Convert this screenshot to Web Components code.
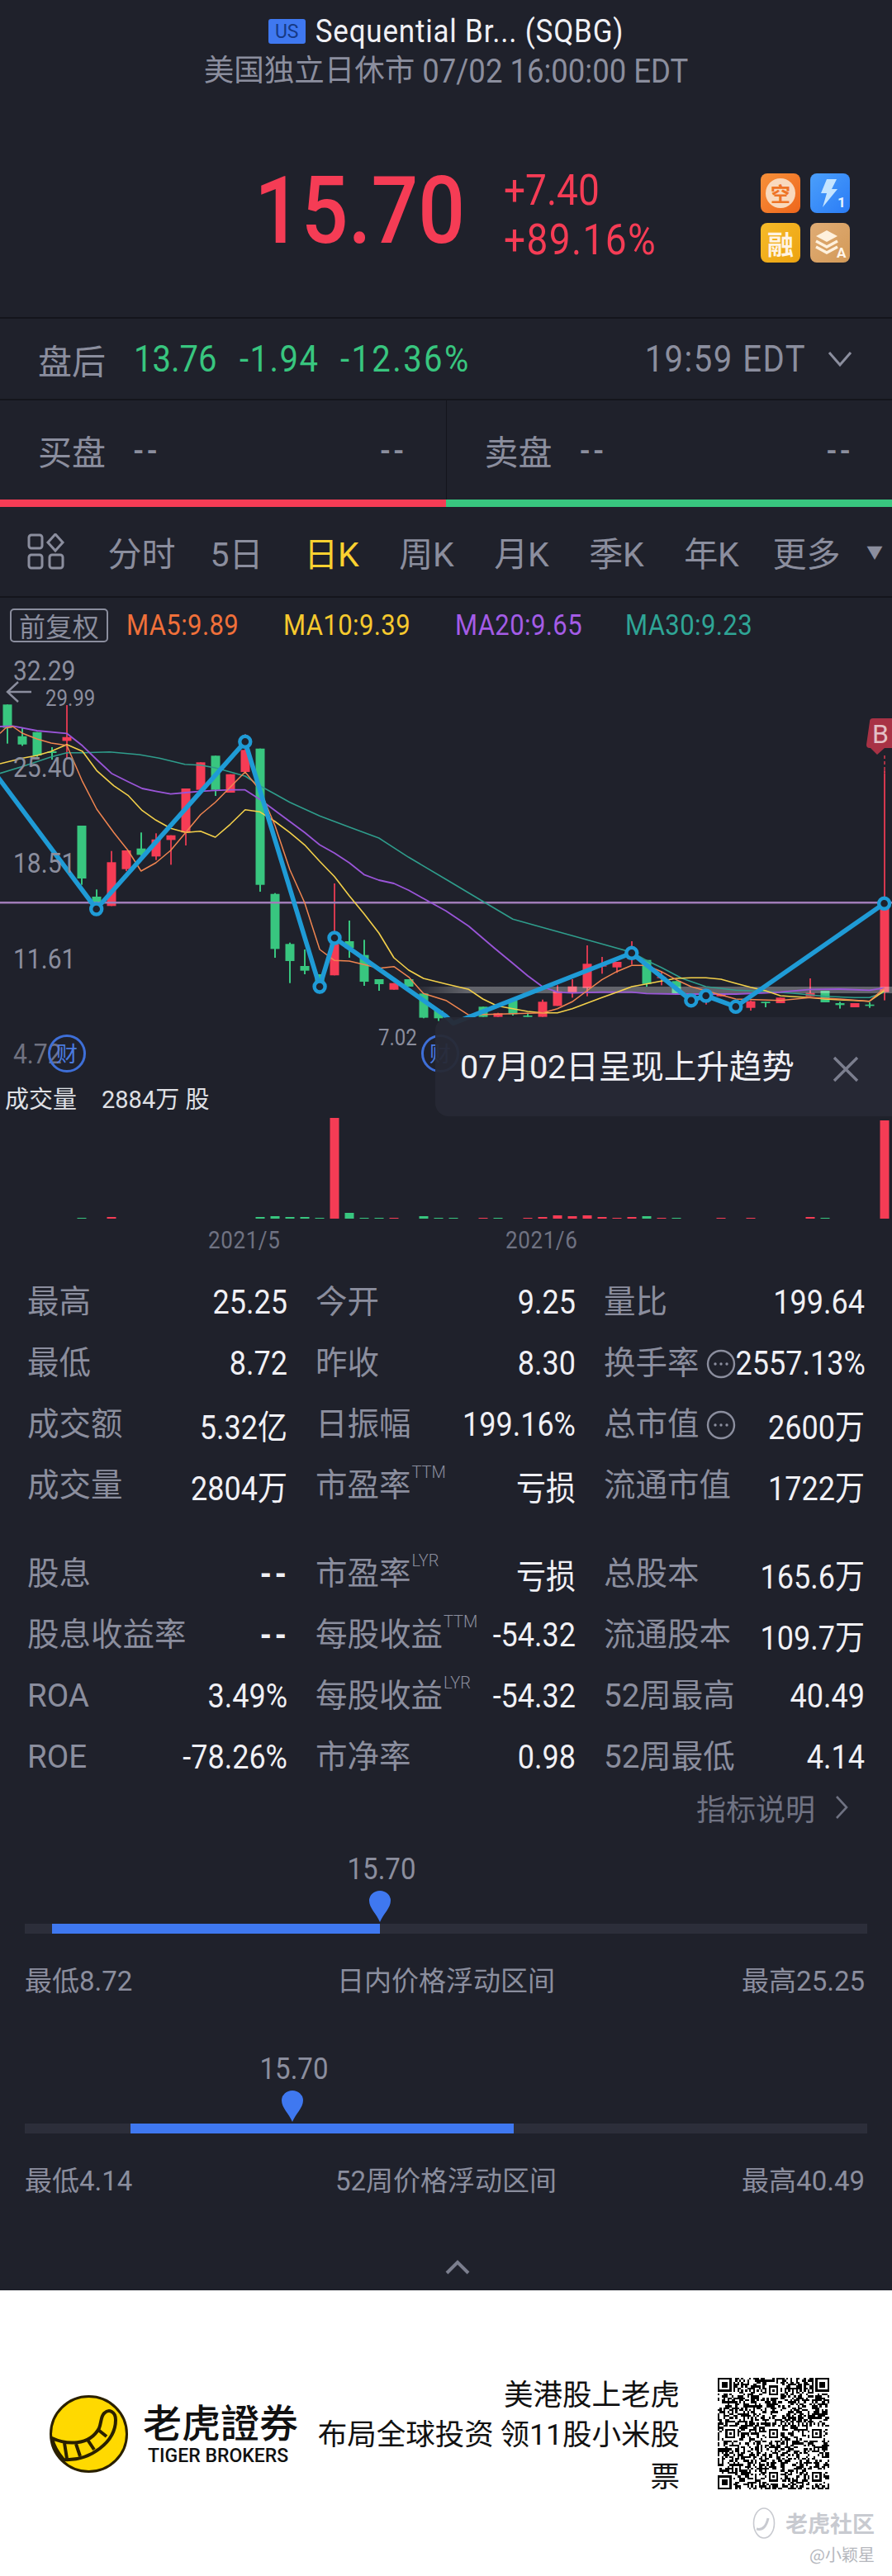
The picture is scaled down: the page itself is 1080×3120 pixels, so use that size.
<!DOCTYPE html>
<html lang="zh">
<head>
<meta charset="utf-8">
<title>SQBG</title>
<style>
  html, body { margin: 0; padding: 0; background: #1f212b; }
  body { width: 1080px; height: 3120px; overflow: hidden; color: #8b8e9e; font-family: Roboto, "Noto Sans CJK SC", sans-serif; }
</style>
</head>
<body>
<stock-header></stock-header>
<price-block></price-block>
<after-hours></after-hours>
<bid-ask></bid-ask>
<period-tabs></period-tabs>
<kline-chart></kline-chart>
<stat-table></stat-table>
<price-range value="15.70" pos="430" from="33" to="430" low="最低8.72" high="最高25.25" title="日内价格浮动区间"></price-range>
<price-range value="15.70" pos="324" from="128" to="592" low="最低4.14" high="最高40.49" title="52周价格浮动区间"></price-range>
<collapse-row></collapse-row>
<promo-footer></promo-footer>

<script>
const FONT = 'Roboto, "Noto Sans CJK SC", sans-serif';
const RED = "#f53c55";
const GREEN = "#38c67f";

class DinNum extends HTMLElement {
  constructor() {
    super();
    this.attachShadow({ mode: "open" }).innerHTML = `
      <style>
        :host { display: inline-block; transform: scaleY(1.13); font-family: ${FONT}; }
      </style>
      <slot></slot>`;
  }
}
customElements.define("din-num", DinNum);

class StockHeader extends HTMLElement {
  constructor() {
    super();
    this.attachShadow({ mode: "open" }).innerHTML = `
      <style>
        :host { display: block; height: 120px; padding-top: 14px; box-sizing: border-box; font-family: ${FONT}; }
        .title { display: flex; justify-content: center; align-items: center; gap: 12px; height: 48px; color: #f0f0f5; font-size: 35px; letter-spacing: .8px; }
        .us { width: 45px; height: 30px; border-radius: 3px; background: #3f78f0; color: #163a86; font-size: 23px; letter-spacing: 0; display: flex; align-items: center; justify-content: center; }
        .sub { display: flex; justify-content: center; height: 48px; line-height: 48px; color: #8b8e9e; font-size: 36.5px; }
      </style>
      <div class="title"><span class="us">US</span><din-num>Sequential Br... (SQBG)</din-num></div>
      <div class="sub">美国独立日休市&nbsp;<din-num>07/02 16:00:00 EDT</din-num></div>`;
  }
}
customElements.define("stock-header", StockHeader);

class PriceBlock extends HTMLElement {
  constructor() {
    super();
    this.attachShadow({ mode: "open" }).innerHTML = `
      <style>
        :host { display: flex; align-items: center; height: 266px; box-sizing: border-box; padding: 8px 51px 0 308px; border-bottom: 2px solid #14151c; color: ${RED}; font-family: ${FONT}; }
        .price { font-size: 100px; font-weight: 500; width: 302px; flex: none; line-height: 1; }
        .chg { display: flex; flex-direction: column; gap: 22px; font-size: 46px; margin-top: 8px; line-height: 38px; }
        .wide { letter-spacing: 1.4px; }
        .badges { margin-left: auto; margin-top: 16px; display: grid; grid-template-columns: 48px 48px; gap: 12px; }
        .b { width: 48px; height: 48px; border-radius: 8px; display: flex; align-items: center; justify-content: center; color: #fff3e2; font-family: "Noto Sans CJK SC", sans-serif; font-weight: 700; }
        .kong { background: linear-gradient(135deg, #f7913a, #ee661c); font-size: 24px; }
        .kong span { width: 36px; height: 36px; border-radius: 50%; background: #f9d9bd; color: #ee7426; display: flex; align-items: center; justify-content: center; line-height: 1; }
        .flash { background: linear-gradient(135deg, #4b9ffb, #2a7cf6); }
        .rong { background: linear-gradient(135deg, #f7bb2a, #eca310); font-size: 32px; }
        .stack { background: linear-gradient(135deg, #e0ac75, #d39a58); }
      </style>
      <din-num class="price">15.70</din-num>
      <div class="chg"><din-num>+7.40</din-num><din-num class="wide">+89.16%</din-num></div>
      <div class="badges">
        <div class="b kong"><span>空</span></div>
        <div class="b flash">
          <svg width="48" height="48" viewBox="0 0 48 48">
            <path d="M20 7h12l-6 12h7L15 41l5-17h-7z" fill="#c4e4ff"/>
            <text x="33" y="41" font-size="17" font-weight="700" font-family="Roboto" fill="#e8f4ff">1</text>
          </svg>
        </div>
        <div class="b rong">融</div>
        <div class="b stack">
          <svg width="48" height="48" viewBox="0 0 48 48">
            <path d="M20 9l13 7-13 7-13-7z" fill="#fff1dd"/>
            <path d="M7 22l13 7 13-7M7 29l13 7 13-7" fill="none" stroke="#fff1dd" stroke-width="3.4"/>
            <text x="32" y="42" font-size="17" font-weight="700" font-family="Roboto" fill="#fff6ea">A</text>
          </svg>
        </div>
      </div>`;
  }
}
customElements.define("price-block", PriceBlock);

class AfterHours extends HTMLElement {
  constructor() {
    super();
    this.attachShadow({ mode: "open" }).innerHTML = `
      <style>
        :host { display: flex; align-items: center; height: 99px; box-sizing: border-box; padding: 0 48px 0 46px; border-bottom: 2px solid #14151c; font-family: ${FONT}; }
        .lbl { font-size: 41px; font-family: "Noto Sans CJK SC", sans-serif; margin-right: 34px; color: #8b8e9e; }
        .g { color: ${GREEN}; font-size: 40px; flex: none; }
        .t { margin-left: auto; font-size: 40px; color: #8b8e9e; letter-spacing: 1.5px; }
        svg { margin-left: 26px; }
      </style>
      <span class="lbl">盘后</span>
      <din-num class="g" style="width:128px">13.76</din-num><din-num class="g" style="width:122px;letter-spacing:1.5px">-1.94</din-num><din-num class="g" style="letter-spacing:2.4px">-12.36%</din-num>
      <din-num class="t">19:59 EDT</din-num>
      <svg width="30" height="20" viewBox="0 0 30 20"><path d="M2 2l13 15L28 2" fill="none" stroke="#8b8e9e" stroke-width="3"/></svg>`;
  }
}
customElements.define("after-hours", AfterHours);

class BidAsk extends HTMLElement {
  constructor() {
    super();
    this.attachShadow({ mode: "open" }).innerHTML = `
      <style>
        :host { display: block; font-family: "Noto Sans CJK SC", sans-serif; }
        .row { display: flex; height: 120px; }
        .side { flex: 1; display: flex; align-items: center; box-sizing: border-box; padding: 0 47px 0 46px; font-size: 41px; }
        .side + .side { border-left: 1px solid #14151c; }
        .d { font-family: ${FONT}; font-weight: 700; font-size: 34px; color: #8b8e9e; margin-left: 33px; letter-spacing: 3px; }
        .d:last-child { margin-left: auto; }
        .bar { display: flex; height: 9px; }
        .bar i { flex: 1; }
      </style>
      <div class="row">
        <div class="side">买盘<span class="d">--</span><span class="d">--</span></div>
        <div class="side">卖盘<span class="d">--</span><span class="d">--</span></div>
      </div>
      <div class="bar"><i style="background:${RED}"></i><i style="background:${GREEN}"></i></div>`;
  }
}
customElements.define("bid-ask", BidAsk);

class PeriodTabs extends HTMLElement {
  constructor() {
    super();
    const tabs = ["分时", "5日", "日K", "周K", "月K", "季K", "年K", "更多"];
    this.attachShadow({ mode: "open" }).innerHTML = `
      <style>
        :host { display: flex; align-items: center; height: 110px; box-sizing: border-box; padding-left: 33px; border-bottom: 2px solid #14151c; color: #8b8e9e; font-size: 41px; font-family: ${FONT}; }
        svg { flex: none; margin-right: 35px; }
        .tab { flex: none; width: 115px; text-align: center; }
        .on { color: #fbd130; }
        .more { color: #8b8e9e; font-size: 20px; margin-left: 15px; }
      </style>
      <svg width="46" height="44" viewBox="0 0 46 44" fill="none" stroke="#8b8e9e" stroke-width="3">
        <rect x="2" y="2" width="16" height="16" rx="3"/>
        <path d="M34 1l9 10-9 10-9-10z"/>
        <rect x="2" y="26" width="16" height="16" rx="3"/>
        <rect x="27" y="26" width="16" height="16" rx="3"/>
      </svg>
      ${tabs.map((t) => `<span class="tab${t === "日K" ? " on" : ""}">${t}</span>`).join("")}
      <span class="more">▼</span>`;
  }
}
customElements.define("period-tabs", PeriodTabs);

// chart points were read off the reference, x in 0..3136, y in 0..1560 from y=760
const zx = (x) => (x / 2.904).toFixed(1);
const zy = (y) => (y / 3 + 36).toFixed(1);

// [index, colour, wickTop, bodyTop, bodyBottom, wickBottom]
const CANDLES = [
  [0,"g",280,280,365,422],[1,"g",365,395,425,430],[2,"g",380,380,465,470],[3,"g",435,450,456,480],
  [4,"r",282,398,412,475],[5,"g",720,720,912,935],[6,"g",952,978,1005,1010],[7,"r",812,853,1012,1012],
  [8,"r",810,810,878,885],[9,"g",745,803,826,830],[10,"r",748,770,832,845],[11,"r",755,755,772,862],
  [12,"r",585,585,745,792],[13,"r",490,490,590,590],[14,"g",466,466,590,612],[15,"r",533,533,600,600],
  [16,"r",388,445,525,525],[17,"g",440,440,935,960],[18,"g",965,968,1168,1200],[19,"g",1145,1150,1212,1292],
  [20,"g",1170,1230,1247,1260],[21,"g",1260,1260,1300,1330],[22,"r",930,1150,1264,1264],[23,"g",1065,1140,1165,1200],
  [24,"g",1135,1190,1287,1302],[25,"g",1278,1278,1296,1320],[26,"r",1292,1292,1316,1316],[27,"g",1278,1278,1305,1305],
  [28,"g",1330,1330,1418,1420],[29,"g",1392,1392,1420,1430],
  [32,"g",1378,1378,1415,1415],[33,"r",1400,1402,1415,1415],[34,"g",1355,1355,1405,1410],[35,"g",1400,1410,1415,1415],
  [36,"r",1352,1360,1415,1415],[37,"r",1300,1322,1375,1375],[38,"r",1278,1304,1328,1345],[39,"r",1155,1222,1310,1340],
  [40,"r",1197,1228,1232,1258],[41,"r",1215,1215,1235,1255],[42,"r",1140,1175,1205,1225],[43,"g",1208,1208,1295,1305],
  [44,"r",1250,1270,1274,1300],[45,"g",1285,1285,1330,1330],[47,"r",1320,1325,1350,1370],[48,"r",1330,1330,1340,1340],
  [50,"r",1355,1358,1382,1392],[51,"g",1360,1360,1365,1380],[52,"r",1345,1345,1365,1365],
  [54,"r",1275,1328,1340,1340],[55,"g",1320,1320,1362,1362],[56,"g",1360,1365,1372,1385],[57,"r",1365,1365,1380,1380],
  [58,"g",1362,1370,1375,1382],[59,"r",520,1020,1325,1355],
];

const MA5 = [[0,385],[20,365],[45,360],[80,385],[130,405],[180,420],[235,428],[290,560],[340,660],[400,745],[450,810],[496,885],[548,855],[600,810],[653,745],[705,680],[757,635],[810,580],[862,525],[914,590],[967,720],[1019,880],[1071,1000],[1124,1170],[1176,1210],[1228,1212],[1280,1225],[1332,1238],[1385,1232],[1437,1270],[1489,1330],[1568,1355],[1648,1408],[1908,1400],[1960,1385],[2012,1360],[2064,1320],[2116,1280],[2169,1250],[2221,1228],[2273,1228],[2325,1250],[2378,1280],[2430,1305],[2482,1320],[2535,1335],[2587,1350],[2744,1355],[2848,1345],[2953,1350],[3057,1358],[3109,1310]];
const MA10 = [[0,495],[80,475],[130,465],[180,450],[235,425],[290,450],[340,520],[400,575],[450,610],[500,665],[548,700],[600,730],[653,745],[705,740],[757,762],[810,715],[862,662],[914,670],[967,705],[1019,745],[1071,790],[1124,850],[1176,905],[1228,975],[1280,1040],[1332,1110],[1385,1200],[1437,1245],[1489,1275],[1568,1295],[1648,1315],[1698,1350],[1748,1375],[1803,1385],[1855,1395],[1907,1400],[1960,1400],[2012,1385],[2064,1365],[2116,1345],[2169,1325],[2221,1305],[2273,1295],[2325,1285],[2378,1275],[2430,1273],[2482,1273],[2535,1278],[2587,1293],[2639,1307],[2692,1320],[2744,1338],[2796,1342],[2848,1345],[2900,1350],[2953,1353],[3005,1355],[3057,1358],[3109,1320]];
const MA20 = [[0,360],[45,358],[130,375],[235,385],[290,430],[340,480],[392,530],[450,560],[500,585],[548,595],[600,605],[653,600],[705,595],[757,592],[810,590],[862,590],[914,625],[967,665],[1019,705],[1071,745],[1124,790],[1176,820],[1228,855],[1280,898],[1332,918],[1385,930],[1437,955],[1489,985],[1568,1030],[1648,1085],[1738,1165],[1803,1220],[1855,1265],[1907,1305],[1960,1325],[2012,1328],[2116,1325],[2221,1325],[2273,1330],[2378,1332],[2482,1332],[2587,1332],[2692,1328],[2744,1325],[2848,1315],[2953,1314],[3057,1318],[3109,1310]];
const MA30 = [[0,530],[80,505],[180,470],[235,455],[290,455],[385,452],[490,462],[560,475],[650,497],[705,500],[757,510],[810,525],[862,540],[914,575],[967,605],[1019,635],[1124,685],[1228,725],[1332,765],[1437,835],[1568,915],[1698,995],[1803,1060],[1907,1090],[2012,1120],[2116,1150],[2221,1180],[2273,1210],[2325,1235],[2398,1275],[2482,1305],[2587,1318],[2692,1322],[2796,1330],[2900,1340],[3005,1345],[3057,1345],[3109,1325]];
const ZIG = [[-10,540],[339,1023],[862,415],[1124,1305],[1176,1128],[1568,1412],[1593,1438],[2221,1183],[2430,1355],[2482,1338],[2587,1378],[3109,1003]];
const NODES = [[339,1023],[862,415],[1124,1305],[1176,1128],[2221,1183],[2430,1355],[2482,1338],[2587,1378],[3109,1003]];

const line = (pts, color, w) =>
  `<polyline fill="none" stroke="${color}" stroke-width="${w}" stroke-linejoin="round" points="${pts.map((p) => zx(p[0]) + "," + zy(p[1])).join(" ")}"/>`;

function candleSvg() {
  return CANDLES.map(([i, c, wt, bt, bb, wb]) => {
    const x = 9 + 18 * i;
    const col = c === "r" ? RED : GREEN;
    return `<rect x="${x - 1}" y="${zy(wt)}" width="2" height="${(wb - wt) / 3}" fill="${col}" opacity="${c === "r" ? 0.85 : 1}"/>` +
      `<rect x="${x - 5.5}" y="${zy(bt)}" width="11" height="${(bb - bt) / 3}" fill="${col}"/>`;
  }).join("");
}

// volume bars: [index, colour, height]
const VOLS = [[5,"g",1],[7,"r",2],[17,"g",2],[18,"g",3],[19,"g",2],[20,"g",2],[21,"g",1],[22,"r",122],[23,"g",7],[24,"g",1],[25,"g",1],[26,"r",1],[28,"g",3],[29,"g",1],[30,"g",1],[32,"r",1],[33,"g",1],[35,"r",1],[36,"r",2],[37,"r",4],[38,"r",3],[39,"r",4],[40,"r",2],[41,"r",1],[42,"r",2],[43,"g",3],[44,"r",1],[45,"g",1],[48,"r",1],[50,"r",1],[54,"r",2],[55,"g",1],[59,"r",119]];

function volSvg() {
  return VOLS.map(([i, c, h]) =>
    `<rect x="${9 + 18 * i - 5.5}" y="${752 - h}" width="11" height="${h}" fill="${c === "r" ? RED : GREEN}"/>`).join("");
}

class KlineChart extends HTMLElement {
  constructor() {
    super();
    this.attachShadow({ mode: "open" }).innerHTML = `
      <style>
        :host { display: block; position: relative; height: 752px; box-sizing: border-box; padding-top: 13px; font-family: ${FONT}; }
        svg.plot { position: absolute; left: 0; top: 0; }
        .legend { position: relative; display: flex; align-items: center; height: 41px; padding-left: 12px; font-size: 31px; letter-spacing: .4px; }
        .adj { width: 119px; height: 41px; box-sizing: border-box; border: 2px solid #8b8e9e; border-radius: 5px; color: #8b8e9e; font-size: 32px; line-height: 36px; text-align: center; font-family: "Noto Sans CJK SC", sans-serif; margin-right: 22px; }
        .ma { flex: none; }
        .y { position: absolute; left: 16px; font-size: 30px; line-height: 30px; color: #8b8e9e; }
        .hi { position: absolute; font-size: 24px; line-height: 24px; color: #8b8e9e; }
        .cai { position: absolute; width: 40px; height: 40px; border: 3px solid #3e6fd8; border-radius: 50%; color: #4a7be0; font-size: 26px; line-height: 38px; text-align: center; font-family: "Noto Sans CJK SC", sans-serif; }
        .vol { position: absolute; left: 6px; top: 590px; color: #dfe0e5; font-size: 29px; line-height: 36px; display: flex; gap: 30px; }
        .toast { position: absolute; left: 527px; top: 508px; width: 553px; height: 120px; box-sizing: border-box; padding: 25px 0 0 30px; border-radius: 16px 0 0 16px; background: rgba(39,41,53,.95); color: #f0f0f5; font-size: 39.5px; line-height: 72px; display: flex; white-space: nowrap; }
        .toast svg { margin: 22px 0 0 46px; flex: none; }
        .b { position: absolute; left: 1056px; top: 147px; font-size: 32px; line-height: 36px; color: #e3c0c6; }
      </style>
      <svg class="plot" width="1080" height="752" viewBox="0 0 1080 752">
        <defs><linearGradient id="band"><stop offset="0" stop-color="#fff" stop-opacity="0"/><stop offset=".12" stop-color="#fff" stop-opacity=".3"/></linearGradient></defs>
        ${candleSvg()}
        <rect x="495" y="471" width="585" height="8" fill="url(#band)"/>
        <rect x="0" y="368" width="1080" height="2.5" fill="#a07cb8"/>
        ${line(MA30, "#2f9d8c", 1.6)}${line(MA20, "#9a55d8", 1.8)}${line(MA10, "#f3d04a", 1.6)}${line(MA5, "#f08550", 1.5)}
        ${line(ZIG, "#1f9bd6", 5.6)}
        ${NODES.map((n) => `<circle cx="${zx(n[0])}" cy="${zy(n[1])}" r="6.5" fill="#1f212b" stroke="#1f9bd6" stroke-width="4.4"/>`).join("")}
        ${volSvg()}
        <path d="M1053 150a4 4 0 0 1 4-4h23v36h-9l-9 8-8-8h-1a4 4 0 0 1-4-4z" fill="#a83245"/>
        <path d="M1071 191v22" stroke="#a83245" stroke-width="2" stroke-dasharray="4 3"/>
        <path d="M38 114H10m12-12L9 114l13 12" fill="none" stroke="#8b8e9e" stroke-width="2.4"/>
      </svg>
      <div class="legend">
        <span class="adj">前复权</span>
        <din-num class="ma" style="color:#f0703a;width:190px">MA5:9.89</din-num>
        <din-num class="ma" style="color:#f6c92e;width:208px">MA10:9.39</din-num>
        <din-num class="ma" style="color:#a45ce6;width:206px">MA20:9.65</din-num>
        <din-num class="ma" style="color:#2fa596">MA30:9.23</din-num>
      </div>
      <din-num class="y" style="top:74px">32.29</din-num>
      <din-num class="y" style="top:191px">25.40</din-num>
      <din-num class="y" style="top:307px">18.51</din-num>
      <din-num class="y" style="top:423px">11.61</din-num>
      <din-num class="y" style="top:538px;opacity:.75">4.72</din-num>
      <din-num class="hi" style="left:55px;top:110px">29.99</din-num>
      <din-num class="hi" style="left:458px;top:521px">7.02</din-num>
      <span class="cai" style="left:58px;top:529px">财</span>
      <span class="cai" style="left:510px;top:529px">财</span>
      <span class="b">B</span>
      <div class="vol"><span>成交量</span><span>2884万 股</span></div>
      <div class="toast">
        <span>07月02日呈现上升趋势</span>
        <svg width="32" height="32" viewBox="0 0 32 32"><path d="M2 2l28 28M30 2L2 30" stroke="#7b7e8e" stroke-width="3.4"/></svg>
      </div>`;
  }
}
customElements.define("kline-chart", KlineChart);

class StatCell extends HTMLElement {
  static get observedAttributes() { return ["label", "value", "sup", "info"]; }
  connectedCallback() { this.render(); }
  attributeChangedCallback() { this.render(); }
  render() {
    if (!this.shadowRoot) this.attachShadow({ mode: "open" });
    const info = this.getAttribute("info");
    const sup = this.getAttribute("sup");
    const value = this.getAttribute("value");
    this.shadowRoot.innerHTML = `
      <style>
        :host { display: flex; align-items: center; height: 74px; font-family: ${FONT}; }
        .l { display: flex; align-items: flex-start; font-size: 38.5px; line-height: 50px; color: #8b8e9e; white-space: nowrap; font-family: Roboto, "Noto Sans CJK SC", sans-serif; }
        sup { font: 300 20px/22px Roboto, sans-serif; margin: -2px 0 0 1px; }
        svg { margin: 8px 0 0 8px; flex: none; }
        din-num { margin-left: auto; font-size: 36px; color: #f0f0f5; white-space: nowrap; }
        din-num.dash { font-weight: 700; letter-spacing: 4px; margin-right: -3px; }
      </style>
      <span class="l">${this.getAttribute("label")}${sup ? `<sup>${sup}</sup>` : ""}${info ? `<svg width="36" height="36" viewBox="0 0 36 36" fill="#8b8e9e"><circle cx="18" cy="18" r="16" fill="none" stroke="#8b8e9e" stroke-width="2.4"/><circle cx="11" cy="18" r="1.7"/><circle cx="18" cy="18" r="1.7"/><circle cx="25" cy="18" r="1.7"/></svg>` : ""}</span>
      <din-num${value === "--" ? ' class="dash"' : ""}>${value}</din-num>`;
  }
}
customElements.define("stat-cell", StatCell);

const STATS_A = [
  ["最高","25.25"],["今开","9.25"],["量比","199.64"],
  ["最低","8.72"],["昨收","8.30"],["换手率","2557.13%","","1"],
  ["成交额","5.32亿"],["日振幅","199.16%"],["总市值","2600万","","1"],
  ["成交量","2804万"],["市盈率","亏损","TTM"],["流通市值","1722万"],
];
const STATS_B = [
  ["股息","--"],["市盈率","亏损","LYR"],["总股本","165.6万"],
  ["股息收益率","--"],["每股收益","-54.32","TTM"],["流通股本","109.7万"],
  ["ROA","3.49%"],["每股收益","-54.32","LYR"],["52周最高","40.49"],
  ["ROE","-78.26%"],["市净率","0.98"],["52周最低","4.14"],
];
const cell = ([l, v, s, i]) => `<stat-cell label="${l}" value="${v}"${s ? ` sup="${s}"` : ""}${i ? ' info="1"' : ""}></stat-cell>`;

class StatTable extends HTMLElement {
  constructor() {
    super();
    this.attachShadow({ mode: "open" }).innerHTML = `
      <style>
        :host { display: block; font-family: ${FONT}; }
        .dates { display: flex; gap: 276px; height: 64px; padding: 13px 0 0 252px; box-sizing: border-box; font-size: 26px; line-height: 28px; letter-spacing: .6px; color: #6f7282; }
        .dates din-num { width: 84px; text-align: center; }
        .grid { display: grid; grid-template-columns: 315px 315px 316px; column-gap: 34px; padding: 0 33px; }
        .grid + .grid { margin-top: 33px; }
        .more { display: flex; justify-content: flex-end; align-items: center; gap: 24px; height: 48px; padding-right: 53px; color: #6f7282; font-size: 36px; font-family: "Noto Sans CJK SC", sans-serif; }
      </style>
      <div class="dates"><din-num>2021/5</din-num><din-num>2021/6</din-num></div>
      <div class="grid">${STATS_A.map(cell).join("")}</div>
      <div class="grid">${STATS_B.map(cell).join("")}</div>
      <div class="more"><span>指标说明</span><svg width="16" height="30" viewBox="0 0 16 30"><path d="M2 2l12 13L2 28" fill="none" stroke="#6f7282" stroke-width="2.6"/></svg></div>`;
  }
}
customElements.define("stat-table", StatTable);

class PriceRange extends HTMLElement {
  connectedCallback() {
    const a = (n) => this.getAttribute(n);
    this.attachShadow({ mode: "open" }).innerHTML = `
      <style>
        :host { display: block; height: 242px; box-sizing: border-box; padding: 28px 30px 0; font-family: ${FONT}; color: #8b8e9e; }
        .head { position: relative; height: 89px; }
        .val { position: absolute; top: 4px; font-size: 33px; line-height: 38px; transform: translateX(-50%); }
        svg { position: absolute; top: 49px; }
        .track { position: relative; height: 12px; background: #2c2e3a; }
        .fill { position: absolute; top: 0; bottom: 0; background: #3f78f0; }
        .labels { display: grid; grid-template-columns: 1fr auto 1fr; align-items: center; margin-top: 31px; height: 42px; font-size: 33px; }
        .labels span:last-child { justify-self: end; margin-right: 3px; }
      </style>
      <div class="head">
        <span class="val" style="left:${+a("pos") + 2}px"><din-num>${a("value")}</din-num></span>
        <svg style="left:${+a("pos") - 13}px" width="26" height="38" viewBox="0 0 26 38"><path d="M13 38C9 28 0 21 0 12a13 12 0 0 1 26 0c0 9-9 16-13 26z" fill="#3f78f0"/></svg>
      </div>
      <div class="track"><div class="fill" style="left:${a("from")}px;width:${a("to") - a("from")}px"></div></div>
      <div class="labels"><span>${a("low")}</span><span>${a("title")}</span><span>${a("high")}</span></div>`;
  }
}
customElements.define("price-range", PriceRange);

class CollapseRow extends HTMLElement {
  constructor() {
    super();
    this.attachShadow({ mode: "open" }).innerHTML = `
      <style>
        :host { display: flex; justify-content: center; align-items: center; height: 57px; margin-top: 20px; padding-left: 28px; box-sizing: border-box; }
      </style>
      <svg width="30" height="18" viewBox="0 0 30 18"><path d="M2 16L15 3l13 13" fill="none" stroke="#7b7e8e" stroke-width="4"/></svg>`;
  }
}
customElements.define("collapse-row", CollapseRow);

function qrSvg() {
  const n = 57;
  let seed = 20210702;
  const rnd = () => (seed = (seed * 1664525 + 1013904223) >>> 0) / 4294967296;
  const m = [];
  for (let y = 0; y < n; y++) {
    m.push([]);
    for (let x = 0; x < n; x++) m[y].push(rnd() > 0.5 ? 1 : 0);
  }
  const square = (cx, cy, r) => {
    for (let y = -r - 1; y <= r + 1; y++)
      for (let x = -r - 1; x <= r + 1; x++) {
        const X = cx + x, Y = cy + y;
        if (X < 0 || Y < 0 || X >= n || Y >= n) continue;
        const d = Math.max(Math.abs(x), Math.abs(y));
        m[Y][X] = d === r + 1 ? 0 : r === 3 ? (d === 2 ? 0 : 1) : (d === 1 ? 0 : 1);
      }
  };
  for (let i = 0; i < n; i++) { m[6][i] = (i + 1) % 2; m[i][6] = (i + 1) % 2; }
  [6, 28, 50].forEach((y) => [6, 28, 50].forEach((x) => {
    if (!((x === 6 && y === 6) || (x === 50 && y === 6) || (x === 6 && y === 50))) square(x, y, 2);
  }));
  square(3, 3, 3); square(n - 4, 3, 3); square(3, n - 4, 3);
  let d = "";
  m.forEach((row, y) => row.forEach((v, x) => { if (v) d += `M${x} ${y}h1v1h-1z`; }));
  return `<svg width="135" height="135" viewBox="0 0 57 57" shape-rendering="crispEdges" style="flex:none"><path d="${d}" fill="#000"/></svg>`;
}

class PromoFooter extends HTMLElement {
  constructor() {
    super();
    this.attachShadow({ mode: "open" }).innerHTML = `
      <style>
        :host { display: block; position: relative; height: 347px; background: #fff; box-sizing: border-box; padding: 106px 76px 0 60px; font-family: "Noto Sans CJK SC", sans-serif; color: #111; }
        .row { display: flex; align-items: center; height: 135px; }
        .word { margin-left: 18px; display: flex; flex-direction: column; margin-top: -4px; }
        .cn { font-size: 47px; line-height: 56px; font-weight: 500; white-space: nowrap; }
        .en { font: 500 23px/26px Roboto, sans-serif; margin-top: 2px; padding-left: 6px; white-space: nowrap; }
        .ad { margin-left: auto; width: 445px; text-align: right; font-size: 35.5px; line-height: 47.5px; margin-right: 46px; }
        .ad b { font-weight: 400; font-family: Roboto, sans-serif; }
        .mark { position: absolute; right: 21px; top: 262px; display: flex; align-items: center; gap: 12px; color: #c8cad0; font-size: 27px; line-height: 36px; font-weight: 700; }
        .by { position: absolute; right: 21px; top: 306px; color: #b5b7bd; font-size: 20px; line-height: 28px; }
      </style>
      <div class="row">
        <svg width="95" height="94" viewBox="0 0 95 94" style="flex:none">
          <ellipse cx="47.5" cy="47" rx="46" ry="45.500" fill="#ffd900" stroke="#2a2000" stroke-width="3"/>
          <path d="M3 52C20 60 48 62 60 40c3-8 2-14 6-18 6-6 14-2 14 8 0 26-30 50-63 48C10 70 5 62 3 52z" fill="#ffd900" stroke="#2a2000" stroke-width="4" stroke-linejoin="round"/>
          <path d="M18 58l3 19M32 59l5 15M46 54l8 12M59 42l10 8" stroke="#2a2000" stroke-width="4" fill="none"/>
        </svg>
        <div class="word"><span class="cn">老虎證券</span><span class="en">TIGER BROKERS</span></div>
        <div class="ad">美港股上老虎<br>布局全球投资 领<b>11</b>股小米股票</div>
        ${qrSvg()}
      </div>
      <div class="mark">
        <svg width="28" height="40" viewBox="0 0 28 40"><ellipse cx="14" cy="20" rx="12.500" ry="18" fill="none" stroke="#c8cad0" stroke-width="1.600"/><path d="M5 27c8 2 12-4 14-13" fill="none" stroke="#c8cad0" stroke-width="3"/></svg>
        <span>老虎社区</span>
      </div>
      <div class="by">@小颖星</div>`;
  }
}
customElements.define("promo-footer", PromoFooter);
</script>
</body>
</html>
